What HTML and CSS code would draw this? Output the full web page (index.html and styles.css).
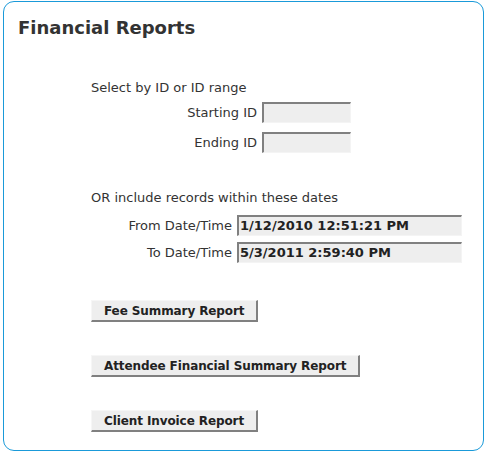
FILE: index.html
```html
<!DOCTYPE html>
<html>
<head>
<meta charset="utf-8">
<link rel="stylesheet" href="styles.css">
</head>
<body>
<div class="card">
  <h1 class="title">Financial Reports</h1>
  <div class="content">
    <p class="section-label">Select by ID or ID range</p>
    <div class="form-grid id-grid">
      <label class="field-label">Starting ID</label>
      <span class="field id-field"></span>
      <label class="field-label">Ending ID</label>
      <span class="field id-field"></span>
    </div>
    <p class="section-label dates-label">OR include records within these dates</p>
    <div class="form-grid date-grid">
      <label class="field-label">From Date/Time</label>
      <span class="field date-field">1/12/2010 12:51:21 PM</span>
      <label class="field-label">To Date/Time</label>
      <span class="field date-field">5/3/2011 2:59:40 PM</span>
    </div>
    <div class="buttons">
      <button class="btn">Fee Summary Report</button>
      <button class="btn">Attendee Financial Summary Report</button>
      <button class="btn">Client Invoice Report</button>
    </div>
  </div>
</div>
</body>
</html>
```
FILE: styles.css
```css
html, body {
  margin: 0;
  padding: 0;
  background: #fff;
}
body {
  font-family: "DejaVu Sans", Verdana, sans-serif;
  color: #333;
}
.card {
  box-sizing: border-box;
  margin: 1px 0 0 3px;
  width: 481px;
  height: 450px;
  border: 1px solid #1a9ad9;
  border-radius: 11px;
  padding: 14px 14px;
}
.title {
  margin: 0;
  font-size: 18px;
  font-weight: bold;
  color: #333;
  line-height: 24px;
}
.content {
  padding-left: 73px;
  padding-top: 40px;
}
.section-label {
  margin: 0;
  font-size: 13px;
  line-height: 16px;
  color: #333;
}
.form-grid {
  display: grid;
  column-gap: 5px;
  align-items: center;
}
.id-grid {
  grid-template-columns: 166px 89px;
  row-gap: 9px;
  margin-top: 6px;
}
.date-grid {
  grid-template-columns: 141px 225px;
  row-gap: 6px;
  margin-top: 9px;
}
.dates-label {
  margin-top: 37px;
}
.field-label {
  text-align: right;
  font-size: 13px;
  color: #333;
}
.field {
  box-sizing: border-box;
  display: block;
  height: 21px;
  background: #eeeeee;
  border-top: 2px solid #808080;
  border-left: 2px solid #808080;
  border-right: 1px solid #f4f4f4;
  border-bottom: 1px solid #f4f4f4;
  font-size: 13px;
  font-weight: bold;
  line-height: 18px;
  padding-left: 1px;
  color: #222;
}
.buttons {
  display: flex;
  flex-direction: column;
  align-items: flex-start;
  gap: 33px;
  margin-top: 37px;
}
.btn {
  box-sizing: border-box;
  height: 22px;
  padding: 0 12px;
  background: #eeeeee;
  border-top: 1px solid #f6f6f6;
  border-left: 1px solid #f6f6f6;
  border-right: 2px solid #808080;
  border-bottom: 2px solid #808080;
  font-family: "DejaVu Sans", Verdana, sans-serif;
  font-size: 12px;
  font-weight: bold;
  letter-spacing: -0.1px;
  color: #222;
  border-radius: 0;
}
```
